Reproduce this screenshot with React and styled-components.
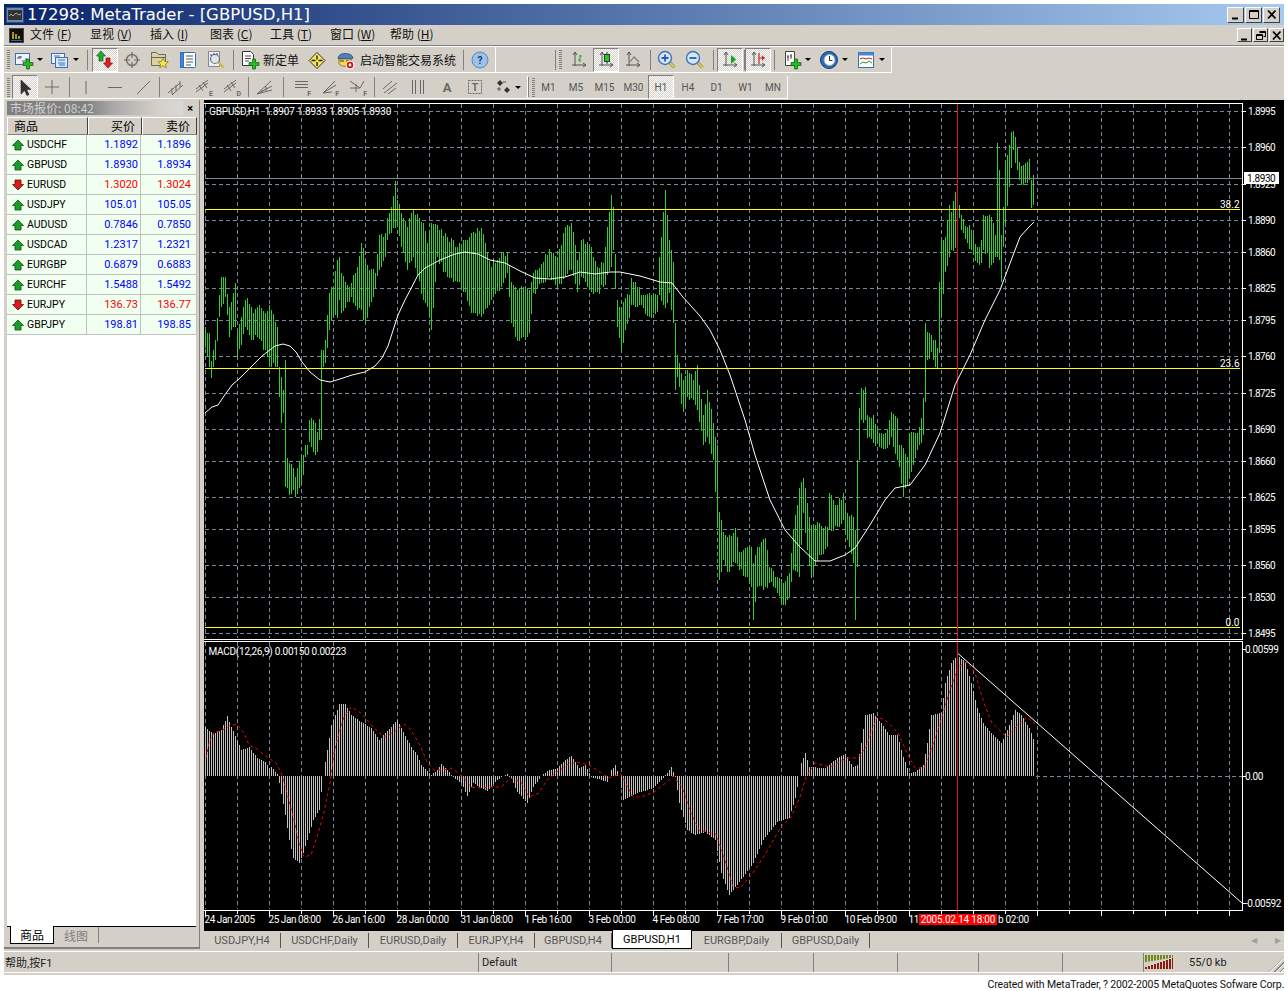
import React from "react";
import styled, { createGlobalStyle } from "styled-components";

const GlobalStyle = createGlobalStyle`
  html, body { margin: 0; padding: 0; background: #fff; }
  body { font-family: Roboto, "Noto Sans CJK SC", sans-serif; font-size: 11px; color: #000; }
  * { box-sizing: border-box; }
`;

/* ---------- chart data, all in page pixels ---------- */

// x, high, low at the turning points of the price bars
const priceKeys = [
  [205,330,380],[206,327,348],[210,333,367],[212,361,378],[215,340,360],[220,295,317],[222,277,307],[226,277,297],
  [230,307,337],[236,283,327],[238,332,357],[245,300,327],[248,298,330],[254,313,340],[258,307,337],[265,313,350],
  [270,305,365],[278,327,367],[279,367,397],[281,377,423],[284,390,413],[285,360,487],[287,458,488],[289,463,495],
  [293,468,490],[296,477,497],[300,462,488],[303,455,475],[305,445,457],[308,445,455],[310,420,442],[312,418,447],
  [316,423,455],[318,432,452],[320,419,440],[321,350,440],[324,350,367],[325,340,363],[327,315,348],[330,293,330],
  [333,288,317],[337,260,318],[339,257,300],[342,273,313],[345,282,308],[350,287,302],[352,283,297],[358,267,310],
  [361,243,310],[365,260,323],[370,270,307],[376,273,288],[380,235,270],[386,233,257],[387,218,240],[392,207,233],
  [395,181,228],[397,200,227],[401,213,247],[407,227,270],[414,210,257],[424,223,300],[428,243,307],[432,223,330],
  [437,225,257],[447,237,277],[457,247,282],[465,240,292],[471,233,313],[481,228,317],[491,267,300],[501,252,287],
  [507,253,273],[511,282,323],[516,287,337],[526,288,340],[529,290,333],[534,273,293],[544,262,283],[549,249,277],
  [557,257,287],[566,227,277],[571,223,270],[577,260,292],[582,240,277],[591,247,292],[597,267,292],[604,263,287],
  [611,195,267],[614,207,250],[617,300,327],[622,308,352],[625,298,330],[630,295,318],[632,278,305],[637,287,307],
  [643,295,308],[650,293,317],[657,295,312],[660,257,295],[666,190,308],[670,240,293],[673,262,323],[676,323,390],
  [678,355,377],[683,380,412],[688,370,397],[693,380,400],[698,365,410],[703,415,445],[708,390,437],[713,423,460],
  [717,445,527],[719,512,580],[723,532,560],[727,537,572],[735,528,563],[740,552,570],[747,547,577],[752,547,587],
  [754,563,620],[758,547,587],[765,538,587],[770,567,583],[777,577,593],[783,583,605],[790,573,597],[793,530,570],
  [800,488,577],[803,478,513],[807,503,550],[812,525,578],[820,523,555],[827,527,547],[830,493,530],[837,505,527],
  [843,493,520],[847,513,540],[853,517,563],[855,530,620],[858,460,567],[859,408,460],[862,388,420],[865,387,420],
  [868,415,438],[873,415,443],[880,433,447],[887,430,448],[892,412,437],[897,418,460],[899,445,467],[903,448,497],
  [907,457,485],[909,433,477],[917,447,460],[918,433,450],[922,418,443],[924,398,435],[925,323,402],[927,332,360],
  [932,335,352],[935,340,367],[937,348,368],[939,282,353],[942,240,317],[946,237,272],[950,205,257],[952,212,250],
  [955,192,248],[959,205,218],[962,215,230],[967,227,243],[972,230,250],[977,247,263],[982,240,263],[983,215,250],
  [987,216,253],[989,215,268],[993,223,263],[995,235,257],[997,143,257],[999,170,260],[1001,235,282],[1004,207,247],
  [1006,162,223],[1009,145,187],[1012,132,168],[1013,131,150],[1016,137,163],[1017,147,170],[1020,162,180],
  [1023,165,185],[1027,162,183],[1029,159,180],[1031,180,208],[1033,175,205],
];

const maLine = [
  [205,413],[212,407],[218,405],[224,396],[232,385],[240,378],[250,368],[262,356],[275,346],[283,344],[290,346],[296,352],
  [302,362],[310,372],[320,380],[330,382],[340,379],[352,375],[365,372],[375,366],[382,358],[388,346],[398,315],[405,300],
  [418,275],[425,268],[440,260],[455,254],[465,252],[478,254],[490,260],[505,263],[520,271],[535,278],[550,279],[565,277],
  [580,272],[595,274],[610,272],[620,272],[640,276],[660,282],[672,283],[682,296],[700,316],[710,330],[720,350],[730,375],
  [745,420],[755,455],[770,500],[785,530],[800,547],[815,561],[830,561],[845,555],[855,548],[870,525],[885,500],[895,488],
  [910,485],[925,465],[940,433],[955,385],[970,355],[985,320],[1000,290],[1012,258],[1020,237],[1028,228],[1034,222],
];

const macdKeys = [
  [205,40],[206,49],[214,42],[221,40],[222,46],[227,60],[232,49],[237,36],[242,26],[249,29],[257,18],[266,14],[269,8],[272,9],[277,2],
  [280,-7],[286,-39],[289,-64],[294,-82],[299,-87],[304,-77],[309,-57],[314,-44],[319,-34],[322,-16],[323,0],[325,14],[328,26],[332,51],
  [336,61],[339,72],[346,72],[351,61],[361,54],[371,48],[379,36],[386,43],[397,56],[404,44],[411,29],[417,21],[422,11],[426,7],[431,1],
  [437,6],[442,12],[449,4],[454,-1],[461,-7],[467,-20],[474,-7],[481,-12],[487,-15],[496,-6],[501,-1],[507,2],[512,-3],[517,-16],[527,-27],
  [534,-11],[541,0],[547,5],[557,8],[566,16],[571,20],[579,8],[586,11],[592,-1],[601,-4],[607,-6],[611,6],[616,11],[619,0],[624,-24],
  [637,-17],[654,-12],[663,-2],[671,9],[676,-1],[680,-27],[688,-54],[695,-59],[706,-56],[716,-64],[721,-97],[730,-119],[740,-106],[753,-87],
  [763,-64],[778,-46],[789,-42],[795,-22],[799,0],[802,13],[806,23],[810,9],[825,8],[838,18],[845,22],[853,9],[858,11],[862,33],[866,61],
  [873,63],[881,53],[890,41],[898,41],[903,19],[909,3],[915,4],[924,11],[927,33],[932,61],[941,63],[946,93],[952,113],[958,121],[965,114],
  [971,93],[977,68],[984,53],[992,43],[1001,33],[1007,46],[1016,66],[1022,61],[1029,48],[1035,32],
];

const signalLine = [
  [206,758],[209,743],[214,732],[221,731],[229,726],[237,724],[244,733],[249,745],[257,749],[267,757],[276,763],[281,772],[287,793],
  [294,820],[299,843],[304,857],[311,855],[317,837],[324,812],[330,783],[334,753],[339,733],[344,717],[351,707],[361,713],[374,728],
  [384,737],[394,732],[404,724],[411,730],[421,747],[427,762],[434,770],[444,770],[451,768],[457,772],[464,778],[471,787],[481,788],
  [491,787],[501,787],[511,778],[521,782],[529,797],[539,793],[547,780],[557,772],[567,765],[577,762],[589,765],[597,770],[609,778],
  [621,774],[624,780],[633,797],[641,797],[654,792],[667,782],[673,776],[682,787],[691,813],[699,830],[716,834],[725,860],[733,887],
  [740,888],[753,873],[766,853],[781,827],[791,817],[800,797],[806,777],[815,763],[830,767],[847,758],[858,758],[866,747],[877,717],
  [885,720],[898,733],[907,753],[915,768],[924,768],[932,747],[941,720],[950,690],[958,667],[967,662],[975,673],[984,703],[992,723],
  [1007,737],[1016,727],[1027,717],[1037,726],
];

const barX = Array.from({ length: 415 }, (_, i) => 205.5 + i * 2);
const barIndex = (x) => Math.floor((x - 205) / 2);

function noise(i) {
  const s = Math.sin(i * 12.9898) * 43758.5453;
  return s - Math.floor(s) - 0.5;
}

// spreads the key points onto the 2px bar raster, keeping spikes on their own bar
function interpolate(keys, index) {
  const snapped = keys
    .map(([x, ...v]) => [barIndex(x), ...v])
    .filter((k, i, all) => !all[i + 1] || all[i + 1][0] !== k[0]);
  return barX.map((_, i) => {
    let next = snapped.findIndex((k) => k[0] >= i);
    if (next === -1) next = snapped.length - 1;
    const b = snapped[next];
    const a = snapped[Math.max(0, next - 1)];
    if (b[0] === i || a[0] === b[0]) return b[index];
    return a[index] + ((b[index] - a[index]) * (i - a[0])) / (b[0] - a[0]);
  });
}

const highs = interpolate(priceKeys, 1);
const lows = interpolate(priceKeys, 2);
const macd = interpolate(macdKeys, 1);

const barsPath = barX
  .map((x, i) => {
    const exact = priceKeys.some((k) => barIndex(k[0]) === i);
    const hi = Math.round(highs[i] + (exact ? 0 : noise(i) * 7));
    const lo = Math.round(lows[i] + (exact ? 0 : noise(i + 99) * 7));
    return `M${x} ${hi}V${Math.max(lo, hi + 6)}`;
  })
  .join("");

const macdPath = barX.map((x, i) => `M${x} 776V${Math.round(776 - macd[i])}`).join("");

const toPoints = (list) => list.map(([x, y]) => `${x},${y}`).join(" ");

const gridX = Array.from({ length: 33 }, (_, i) => 205.5 + i * 32);

const priceLevels = [
  ["1.8995",111],["1.8960",147],["1.8925",184],["1.8890",220],["1.8860",252],["1.8825",288],["1.8795",320],["1.8760",356],
  ["1.8725",393],["1.8690",429],["1.8660",461],["1.8625",497],["1.8595",529],["1.8560",565],["1.8530",597],["1.8495",633],
];

const timeLabels = [
  "24 Jan 2005","25 Jan 08:00","26 Jan 16:00","28 Jan 00:00","31 Jan 08:00","1 Feb 16:00","3 Feb 00:00",
  "4 Feb 08:00","7 Feb 17:00","9 Feb 01:00","10 Feb 09:00","11",
];

const fibLevels = [["38.2",209],["23.6",368],["0.0",627]];

/* ---------- page data ---------- */

const menus = [
  ["文件","F"],["显视","V"],["插入","I"],["图表","C"],["工具","T"],["窗口","W"],["帮助","H"],
];

const quotes = [
  ["USDCHF","1.1892","1.1896",true],["GBPUSD","1.8930","1.8934",true],["EURUSD","1.3020","1.3024",false],
  ["USDJPY","105.01","105.05",true],["AUDUSD","0.7846","0.7850",true],["USDCAD","1.2317","1.2321",true],
  ["EURGBP","0.6879","0.6883",true],["EURCHF","1.5488","1.5492",true],["EURJPY","136.73","136.77",false],
  ["GBPJPY","198.81","198.85",true],
];

const chartTabs = [
  ["USDJPY,H4",77],["USDCHF,Daily",88],["EURUSD,Daily",89],["EURJPY,H4",77],["GBPUSD,H4",77],
  ["GBPUSD,H1",80,true],["EURGBP,Daily",90],["GBPUSD,Daily",88],
];

const periods = [["M1",27],["M5",28],["M15",29],["M30",29],["H1",26,true],["H4",28],["D1",29],["W1",29],["MN",26]];

/* ---------- layout ---------- */

const Page = styled.div`
  width: 1288px;
  height: 991px;
  padding: 4px 4px 0;
  overflow: hidden;
`;

const Win = styled.div`
  width: 1280px;
  background: #d4d0c8;
`;

const TitleBar = styled.div`
  height: 21px;
  display: flex;
  align-items: center;
  padding: 0 4px 0 2px;
  background: linear-gradient(90deg, #0a246a, #a6caf0);
  color: #fff;
  font: 16.5px "DejaVu Sans", sans-serif;
`;

const TitleText = styled.span`
  margin-left: 3px;
  flex: 1;
`;

const CaptionBtn = styled.button`
  width: ${(p) => (p.$small ? 15 : 17)}px;
  height: ${(p) => (p.$small ? 14 : 16)}px;
  margin-left: 1px;
  padding: 0;
  border: 1px solid;
  border-color: #fff #404040 #404040 #fff;
  background: #d4d0c8;
  display: flex;
  align-items: center;
  justify-content: center;
`;

const MenuBar = styled.div`
  height: 20px;
  display: flex;
  align-items: center;
  padding-left: 5px;
`;

const MenuItem = styled.span`
  width: 60px;
  margin-top: -3px;
  font: 12px "Noto Sans CJK SC", sans-serif;
  white-space: pre;
  color: #111;
`;

const MenuSpacer = styled.div`
  flex: 1;
`;

const MenuLogo = styled.div`
  width: 21px;
  display: flex;
`;

const Rule = styled.div`
  height: 2px;
  border-top: 1px solid #808080;
  border-bottom: 1px solid #fff;
`;

const ToolRow = styled.div`
  height: ${(p) => p.$h}px;
  padding-top: ${(p) => p.$top || 0}px;
  display: flex;
`;

const Band = styled.div`
  display: flex;
  align-items: center;
  width: ${(p) => p.$w}px;
  border-bottom: 1px solid #fff;
  border-right: ${(p) => (p.$open ? 0 : "1px solid #fff")};
`;

const Grip = styled.div`
  width: 3px;
  height: 19px;
  flex: none;
  margin: 0 ${(p) => p.$after}px 0 3px;
  background: repeating-linear-gradient(180deg, #808080 0 1px, #d4d0c8 1px 2px);
`;

const ToolBtn = styled.div`
  width: ${(p) => p.$w || 28}px;
  height: ${(p) => (p.$tall ? 24 : 22)}px;
  flex: none;
  display: flex;
  align-items: center;
  justify-content: ${(p) => (p.$left ? "flex-start" : "center")};
  padding-left: ${(p) => p.$left || 0}px;
  gap: ${(p) => p.$gap || 0}px;
  font: 12px "Noto Sans CJK SC", sans-serif;
  color: #111;
  ${(p) =>
    p.$pressed &&
    `
    background: repeating-conic-gradient(#fff 0 25%, #d4d0c8 0 50%) 0 0 / 2px 2px;
    border: 1px solid;
    border-color: #808080 #fff #fff #808080;
  `}
`;

const PeriodBtn = styled(ToolBtn)`
  font: 10px Roboto, sans-serif;
  color: #555;
`;

const Sep = styled.div`
  width: ${(p) => p.$w || 6}px;
  height: 20px;
  flex: none;
  display: flex;
  justify-content: center;
  &::before {
    content: "";
    width: 1px;
    background: #808080;
  }
`;

const Drop = styled.i`
  width: 0;
  height: 0;
  flex: none;
  border: 3px solid transparent;
  border-top: 3px solid #000;
  border-bottom: 0;
`;

const Body = styled.div`
  display: flex;
  margin-top: 1px;
  height: 850px;
`;

const LeftPanel = styled.div`
  width: 196px;
  height: 849px;
  flex: none;
  padding: 1px 3px 0;
  display: flex;
  flex-direction: column;
  border-bottom: 2px solid #808080;
  border-right: 1px solid #808080;
`;

const PanelHead = styled.div`
  height: 14px;
  flex: none;
  display: flex;
  align-items: center;
  justify-content: space-between;
`;

const PanelTitle = styled.div`
  width: 176px;
  height: 14px;
  padding-left: 3px;
  font: 12px/14px "Noto Sans CJK SC", sans-serif;
  color: #d0d0d0;
  background: linear-gradient(90deg, #808080 45%, #a8a8a8 60%, #d4d0c8 85%, #d8d8d8);
`;

const CloseMark = styled.span`
  font: bold 11px Roboto, sans-serif;
  margin-right: 3px;
`;

const QuoteList = styled.div`
  flex: 1;
  margin-top: 2px;
  background: #fff;
`;

const QuoteHead = styled.div`
  display: grid;
  grid-template-columns: 81px 54px 55px;
  height: 18px;
`;

const HeadCell = styled.div`
  padding: 0 ${(p) => (p.$right ? 6 : 0)}px 0 ${(p) => (p.$right ? 0 : 6)}px;
  text-align: ${(p) => (p.$right ? "right" : "left")};
  font: 12px/16px "Noto Sans CJK SC", sans-serif;
  background: #d4d0c8;
  border: 1px solid;
  border-color: #fff #404040 #808080 #fff;
`;

const QuoteRow = styled.div`
  display: grid;
  grid-template-columns: 80px 54px 56px;
  height: 20px;
  background: #f0fff0;
  border-bottom: 1px solid #c0c0c0;
`;

const SymbolCell = styled.div`
  display: flex;
  align-items: center;
  gap: 3px;
  padding-left: 5px;
  font: 10.5px Roboto, sans-serif;
  color: #000;
  border-right: 1px solid #c0c0c0;
`;

const PriceCell = styled.div`
  padding-right: ${(p) => p.$pad}px;
  text-align: right;
  font: 11px/19px Roboto, sans-serif;
  color: ${(p) => (p.$up ? "#0000ff" : "#ff0000")};
  border-right: 1px solid #c0c0c0;
`;

const PanelTabs = styled.div`
  height: 21px;
  flex: none;
  display: flex;
  align-items: flex-start;
  padding-left: 3px;
  border-top: 1px solid #000;
  font: 12px "Noto Sans CJK SC", sans-serif;
`;

const PanelTab = styled.div`
  height: ${(p) => (p.$active ? 18 : 16)}px;
  margin-top: ${(p) => (p.$active ? -1 : 0)}px;
  width: ${(p) => p.$w}px;
  text-align: center;
  line-height: 17px;
  color: ${(p) => (p.$active ? "#000" : "#808080")};
  background: ${(p) => (p.$active ? "#fff" : "transparent")};
  border: ${(p) => (p.$active ? "1px solid #000" : 0)};
  border-top: 0;
  border-right: ${(p) => (p.$active ? "1px solid #000" : "1px solid #808080")};
`;

const ChartColumn = styled.div`
  flex: 1;
  margin-left: 4px;
  min-width: 0;
  display: flex;
  flex-direction: column;
`;

const ChartSvg = styled.svg`
  display: block;
  width: 1080px;
  height: 830px;
  background: #000;
  flex: none;
`;

const ChartText = styled.text`
  font: 10px Roboto, sans-serif;
  white-space: pre;
  fill: ${(p) => p.$fill || "#fff"};
  letter-spacing: ${(p) => p.$track || 0}px;
`;

const TabStrip = styled.div`
  height: 20px;
  display: flex;
  font: 11px/19px Roboto, sans-serif;
  border-top: 1px solid #000;
`;

const ChartTab = styled.div`
  width: ${(p) => p.$w}px;
  height: ${(p) => (p.$active ? 19 : 15)}px;
  margin-top: ${(p) => (p.$active ? -1 : 2)}px;
  line-height: ${(p) => (p.$active ? 19 : 15)}px;
  text-align: center;
  color: ${(p) => (p.$active ? "#000" : "#555")};
  background: ${(p) => (p.$active ? "#fff" : "transparent")};
  border-right: ${(p) => (p.$active ? "1px solid #000" : "1px solid #555")};
  border-bottom: ${(p) => (p.$active ? "1px solid #000" : 0)};
  border-left: ${(p) => (p.$active ? "1px solid #000" : 0)};
`;

const TabArrows = styled.div`
  margin-left: auto;
  width: 36px;
  display: flex;
  justify-content: space-between;
  align-items: center;
  padding: 0 3px;
  color: #a0a0a0;
  font-size: 8px;
`;

const StatusBar = styled.div`
  height: 21px;
  margin-top: 1px;
  display: flex;
  align-items: center;
  border-top: 1px solid #fff;
  position: relative;
`;

const StatusCell = styled.div`
  width: ${(p) => p.$w}px;
  height: 19px;
  flex: none;
  padding-left: ${(p) => p.$pad || 0}px;
  display: flex;
  align-items: center;
  gap: ${(p) => p.$gap || 0}px;
  font: 11px Roboto, "Noto Sans CJK SC", sans-serif;
  color: #222;
  border-right: ${(p) => (p.$last ? 0 : "1px solid #808080")};
`;

const Resize = styled.div`
  position: absolute;
  right: 0;
  bottom: 0;
  width: 15px;
  height: 15px;
  background: repeating-linear-gradient(135deg, transparent 0 2px, #808080 2px 3px, #fff 3px 4px);
  clip-path: polygon(100% 0, 100% 100%, 0 100%);
`;

const WinFoot = styled.div`
  height: 3px;
  border-top: 1px solid #fff;
  background: #d4d0c8;
`;

const Credit = styled.div`
  text-align: right;
  padding-top: 3px;
  font: 10.5px Roboto, sans-serif;
  letter-spacing: -0.15px;
  color: #111;
`;

/* ---------- icons ---------- */

const Ico = styled.svg`
  display: block;
  flex: none;
`;

const Icon = ({ w = 20, h = 20, children }) => (
  <Ico width={w} height={h} viewBox={`0 0 ${w} ${h}`}>
    {children}
  </Ico>
);

const GreenPlus = ({ x = 10, y = 10 }) => (
  <path
    transform={`translate(${x} ${y})`}
    d="M3.500 0h3v3.500H10v3H6.500V10h-3V6.500H0v-3h3.500z"
    fill="#22c01e"
    stroke="#0c5a10"
    strokeWidth=".7"
  />
);

const NewChartIcon = () => (
  <Icon>
    <rect x="1.500" y="3.500" width="14" height="11" fill="#eef4ff" stroke="#3a6fb0" />
    <path d="M4 7h4M4 7v2M12 8v3M8 11h5M6 6v3" stroke="#555" fill="none" />
    <GreenPlus x={9} y={9} />
  </Icon>
);

const ProfileIcon = () => (
  <Icon>
    <rect x="1.500" y="3.500" width="13" height="10" fill="#eef4ff" stroke="#3a6fb0" />
    <rect x="5.500" y="7.500" width="12" height="10" fill="#dbe8fa" stroke="#3a6fb0" />
    <path d="M4 6h6M8 10h7M8 13h7M9 15h6" stroke="#3a6fb0" />
  </Icon>
);

const WatchIcon = () => (
  <Icon>
    <path d="M6 1l4.500 5H8v5H4V6H1.500z" fill="#1fae2a" stroke="#0c5a10" strokeWidth=".7" />
    <path d="M11 8h4v5h2.500L13 18l-4.500-5H11z" fill="#e02020" stroke="#7a0808" strokeWidth=".7" />
  </Icon>
);

const CrossIcon = () => (
  <Icon>
    <circle cx="10" cy="10" r="5.500" fill="none" stroke="#7a7a72" strokeWidth="1.600" />
    <path d="M10 2v6M10 12v6M2 10h6M12 10h6" stroke="#6a6a62" strokeWidth="1.200" />
  </Icon>
);

const FolderIcon = () => (
  <Icon>
    <path d="M1.500 5.500V2.500h5l2 2h7v11h-14z" fill="#d9d1a8" stroke="#6d6a50" />
    <path d="M1.500 7.500h14" stroke="#6d6a50" />
    <path d="M13 8l1.600 3.400 3.700.4-2.800 2.400.9 3.600-3.400-2-3.300 2 .9-3.600-2.800-2.400 3.700-.4z" fill="#f4e84a" stroke="#7c7420" strokeWidth=".7" />
  </Icon>
);

const BookIcon = () => (
  <Icon>
    <rect x="2.500" y="2.500" width="15" height="15" rx="1" fill="#fff" stroke="#2f6fc0" />
    <rect x="2.500" y="2.500" width="3" height="15" fill="#3f86de" stroke="#2f6fc0" />
    <path d="M8 6h7M8 9h7M8 12h7M8 15h5" stroke="#555" />
  </Icon>
);

const LensDocIcon = () => (
  <Icon>
    <path d="M2.500 1.500h11v15h-11z" fill="#eef" stroke="#888" />
    <circle cx="9" cy="9" r="4.500" fill="#d9e8f5" stroke="#707070" strokeWidth="1.200" />
    <path d="M5 4v2M8 3v2M11 3v2" stroke="#444" />
    <path d="M12.500 12.500l5 5" stroke="#c9b92c" strokeWidth="2" />
  </Icon>
);

const OrderIcon = () => (
  <Icon>
    <path d="M2.500 1.500h8l3 3v11h-11z" fill="#fff" stroke="#333" />
    <path d="M5 6h6M5 8.500h6M5 11h4" stroke="#444" />
    <GreenPlus x={9} y={9} />
  </Icon>
);

const DiamondIcon = () => (
  <Icon>
    <path d="M10 2.500L18 10.500l-8 8-8-8z" fill="#f5e55c" stroke="#333" />
    <path d="M4.500 10.500h4M15.500 10.500h-4M10 5.500v4M10 12v4" stroke="#222" strokeWidth="1.400" />
  </Icon>
);

const ExpertIcon = () => (
  <Icon>
    <path d="M3 8.500c0-3 3-5 7-5s7 1 8 4.500l-1.500 1z" fill="#4c80c4" stroke="#1e3f70" strokeWidth=".7" />
    <path d="M4 9h12v5c-3 3-9 3-12 0z" fill="#f2dc4e" stroke="#5b5318" strokeWidth=".7" />
    <path d="M5 11h4M11 11h3" stroke="#333" />
    <circle cx="15" cy="15" r="4" fill="#d81818" stroke="#fff" />
    <circle cx="15" cy="15" r="1.400" fill="#fff" />
  </Icon>
);

const HelpIcon = () => (
  <Icon>
    <circle cx="10" cy="10" r="8" fill="#9cc0ea" stroke="#5d86bd" />
    <text x="10" y="14" textAnchor="middle" fontFamily="Roboto" fontWeight="700" fontSize="10" fill="#123a7a">?</text>
  </Icon>
);

const Axes = () => <path d="M6 2v14M3 15h14M14 13l3 2-3 2M4 5l2-3 2 3" fill="none" stroke="#555" />;

const BarsIcon = () => (
  <Icon>
    <Axes />
    <path d="M11 5v7M9 10h2M11 6h2" stroke="#1d9f22" />
  </Icon>
);

const CandleIcon = () => (
  <Icon>
    <Axes />
    <path d="M11 2v12" stroke="#333" />
    <rect x="8.500" y="4.500" width="5" height="7" fill="#20d020" stroke="#333" />
  </Icon>
);

const LineIcon = () => (
  <Icon>
    <Axes />
    <path d="M7 12l4-5 5 5" fill="none" stroke="#7a7a72" strokeWidth="1.200" />
  </Icon>
);

const ZoomIcon = ({ plus }) => (
  <Icon>
    <path d="M11.500 11.500l6 6" stroke="#8d8a2a" strokeWidth="3" />
    <path d="M11.500 11.500l6 6" stroke="#ecdf55" strokeWidth="1.400" />
    <circle cx="8" cy="8" r="6.500" fill="#d6e6fa" stroke="#3d72bd" strokeWidth="1.400" />
    <path d={plus ? "M4.500 8h7M8 4.500v7" : "M4.500 8h7"} stroke="#2a5ca8" strokeWidth="1.800" />
  </Icon>
);

const ShiftIcon = () => (
  <Icon>
    <Axes />
    <path d="M11 5l5 4.500-5 4.500z" fill="#17a31f" />
  </Icon>
);

const AutoIcon = () => (
  <Icon>
    <Axes />
    <path d="M11 3v11M11 8h6" stroke="#c22" strokeWidth="1.200" />
    <path d="M14 5l2.500 3-2.500 3z" fill="#c22" />
  </Icon>
);

const IndicatorIcon = () => (
  <Icon>
    <path d="M3.500 1.500h9v14h-9z" fill="#fff" stroke="#444" />
    <path d="M6 5v6M9 4v5M5 7h2M8 6h2" stroke="#444" />
    <GreenPlus x={9} y={9} />
  </Icon>
);

const ClockIcon = () => (
  <Icon>
    <circle cx="10" cy="10" r="8.500" fill="#2c68b8" stroke="#123e82" />
    <circle cx="10.500" cy="10" r="5.500" fill="#fff" stroke="#9ab" />
    <path d="M10.500 6v4.500h3" stroke="#333" fill="none" />
  </Icon>
);

const TemplateIcon = () => (
  <Icon>
    <rect x="2.500" y="2.500" width="15" height="15" fill="#fff" stroke="#3a6fb0" />
    <rect x="2.500" y="2.500" width="15" height="3" fill="#4a86d4" />
    <path d="M4 9l3-1 3 1 3-1 3 1" fill="none" stroke="#d02020" />
    <path d="M4 14l3-2 3 1 3-2 3 2" fill="none" stroke="#20a020" />
  </Icon>
);

const stroke = "#6a6a64";

const DrawIcon = ({ d, tag }) => (
  <Icon>
    <path d={d} fill="none" stroke={stroke} />
    {tag && (
      <text x="19" y="19" textAnchor="end" fontFamily="Roboto" fontWeight="700" fontSize="7" fill={stroke}>
        {tag}
      </text>
    )}
  </Icon>
);

const CursorIcon = () => (
  <Icon>
    <path d="M6 3v14l3.500-3.500 2.500 5 2-1-2.500-5H16z" fill="#333" stroke="#222" strokeWidth=".6" />
  </Icon>
);

const ObjectsIcon = () => (
  <Icon>
    <path d="M7 3l3 3-3 3-3-3zM14 10l3 3-3 3-3-3z" fill="#333" />
    <path d="M4 12h4M6 10v4M10 5h3" stroke="#555" />
  </Icon>
);

const LabelBoxIcon = () => (
  <Icon>
    <rect x="3.500" y="3.500" width="13" height="13" fill="none" stroke={stroke} strokeDasharray="2 1" />
    <text x="10" y="14" textAnchor="middle" fontFamily="Roboto" fontWeight="700" fontSize="10.500" fill={stroke}>T</text>
  </Icon>
);

const TextIcon = () => (
  <Icon>
    <text x="10" y="15" textAnchor="middle" fontFamily="Roboto" fontWeight="700" fontSize="13" fill={stroke}>A</text>
  </Icon>
);

const TrendArrow = ({ up }) => (
  <Icon w={12} h={12}>
    <path
      d={up ? "M6 1l5.500 5.500H9V11H3V6.500H.5z" : "M3 1h6v4.500h2.500L6 11 .5 5.500H3z"}
      fill={up ? "#1d9c2a" : "#d81c1c"}
      stroke={up ? "#0d4f16" : "#6d0a0a"}
      strokeWidth=".8"
    />
  </Icon>
);

const AppMark = () => (
  <Icon w={15} h={15}>
    <rect x=".5" y=".5" width="14" height="14" fill="#101010" stroke="#444" />
    <path d="M4 4v7M7 6v5M10 8v3" stroke="#f0d020" strokeWidth="1.400" />
    <path d="M2 12.500h11" stroke="#2060d0" />
  </Icon>
);

const TitleIcon = () => (
  <Icon w={18} h={16}>
    <rect x=".5" y=".5" width="17" height="15" fill="#6d88b5" stroke="#2c4a80" />
    <rect x="2" y="3" width="14" height="10" fill="#333" />
    <path d="M3 9l2-2 2 2 3-3 3 2 2-1" fill="none" stroke="#aaa" />
  </Icon>
);

const Traffic = () => (
  <Icon w={28} h={14}>
    {Array.from({ length: 10 }, (_, i) => (
      <g key={i}>
        <rect x={i * 3} y="0" width="2" height={7 - i * 0.5} fill="#6f8a12" />
        <rect x={i * 3} y={12 - i} width="2" height={2 + i} fill="#8c1c10" />
      </g>
    ))}
  </Icon>
);

const CaptionGlyph = ({ kind }) => (
  <Icon w={12} h={11}>
    {kind === "min" && <path d="M2 9.500h6" stroke="#000" strokeWidth="2" />}
    {kind === "max" && <path d="M1.500 1.500h9v8h-9zM1.500 2.500h9" fill="none" stroke="#000" />}
    {kind === "restore" && <path d="M4.500 1.500h6v5h-2M4.500 2.500h6M1.500 4.500h6v5h-6zM1.500 5.500h6" fill="none" stroke="#000" />}
    {kind === "close" && <path d="M2 1.500l7.500 8M9.500 1.500l-7.500 8" stroke="#000" strokeWidth="1.800" />}
  </Icon>
);

/* ---------- chart ---------- */

const Chart = () => (
  <ChartSvg viewBox="204 100 1080 830">
    <g shapeRendering="crispEdges">
      {/* grid */}
      {priceLevels.map(([, y]) => (
        <path key={y} d={`M205 ${y + 0.5}H1242`} stroke="#77889a" strokeDasharray="4 3" />
      ))}
      {gridX.map((x) => (
        <React.Fragment key={x}>
          <path d={`M${x} 104V638`} stroke="#77889a" strokeDasharray="4 3" />
          <path d={`M${x} 642V909`} stroke="#77889a" strokeDasharray="4 3" />
        </React.Fragment>
      ))}
      <path d="M1036 776.500H1242" stroke="#77889a" strokeDasharray="4 3" />

      {/* price pane */}
      <path d={barsPath} stroke="#32cd32" />
      <path d="M205 178.500H1242" stroke="#778899" />
      {fibLevels.map(([, y]) => (
        <path key={y} d={`M205 ${y + 0.5}H1240`} stroke="#ffff00" />
      ))}

      {/* macd pane */}
      <path d={macdPath} stroke="#c0c0c0" />

      {/* crosshair */}
      <path d="M957.500 104V914" stroke="#e01010" />

      {/* frames */}
      <path d="M204 103.500H1242.500V639.500H204M204 641.500H1242.500V910.500H204" fill="none" stroke="#fff" />

      {priceLevels.map(([, y]) => (
        <path key={y} d={`M1243 ${y + 0.5}H1246`} stroke="#fff" />
      ))}
      {[649, 776, 903].map((y) => (
        <path key={y} d={`M1243 ${y + 0.5}H1246`} stroke="#fff" />
      ))}
      {gridX.map((x, i) => (
        <path key={x} d={`M${x} 911V${i % 2 ? 914 : 916}`} stroke="#fff" />
      ))}
      <rect x="919" y="914" width="78" height="11" fill="#ff0000" />
    </g>

    <polyline points={toPoints(maLine)} fill="none" stroke="#fff" />
    <polyline points={toPoints(signalLine)} fill="none" stroke="#ff0000" strokeDasharray="3 3" />
    <path d="M958 653.500L1242 903" stroke="#fff" />

    <ChartText x="209" y="115" $track={-0.15}>GBPUSD,H1  1.8907 1.8933 1.8905 1.8930</ChartText>
    <ChartText x="208.500" y="655" $track={-0.25}>MACD(12,26,9) 0.00150 0.00223</ChartText>

    {priceLevels.map(([label, y]) => (
      <ChartText key={label} x="1248" y={y + 3.500} $track={-0.6}>{label}</ChartText>
    ))}
    <rect x="1244" y="172" width="35" height="12" fill="#fff" />
    <ChartText x="1247" y="181.500" $fill="#000" $track={-0.4}>1.8930</ChartText>
    {fibLevels.map(([label, y]) => (
      <ChartText key={label} x="1239.500" y={y - 1.500} textAnchor="end">{label}</ChartText>
    ))}

    <ChartText x="1245" y="652.500" $track={-0.4}>0.00599</ChartText>
    <ChartText x="1245" y="779.500" $track={-0.4}>0.00</ChartText>
    <ChartText x="1245" y="906.500" $track={-0.4}>-0.00592</ChartText>

    {timeLabels.map((label, i) => (
      <ChartText key={label} x={204.500 + i * 64} y="923" $track={-0.45}>{label}</ChartText>
    ))}
    <ChartText x="958" y="923" textAnchor="middle" $track={-0.2}>2005.02.14 18:00</ChartText>
    <ChartText x="998" y="923" $track={-0.3}>b 02:00</ChartText>
  </ChartSvg>
);

/* ---------- page ---------- */

const App = () => (
  <Page>
    <GlobalStyle />
    <Win>
      <TitleBar>
        <TitleIcon />
        <TitleText>17298: MetaTrader - [GBPUSD,H1]</TitleText>
        <CaptionBtn><CaptionGlyph kind="min" /></CaptionBtn>
        <CaptionBtn><CaptionGlyph kind="max" /></CaptionBtn>
        <CaptionBtn><CaptionGlyph kind="close" /></CaptionBtn>
      </TitleBar>

      <MenuBar>
        <MenuLogo><AppMark /></MenuLogo>
        {menus.map(([label, key]) => (
          <MenuItem key={key}>
            {label} (<u>{key}</u>)
          </MenuItem>
        ))}
        <MenuSpacer />
        <CaptionBtn $small><CaptionGlyph kind="min" /></CaptionBtn>
        <CaptionBtn $small><CaptionGlyph kind="restore" /></CaptionBtn>
        <CaptionBtn $small><CaptionGlyph kind="close" /></CaptionBtn>
      </MenuBar>
      <Rule />

      <ToolRow $h={26}>
        <Band $w={492}>
          <Grip $after={1} />
          <ToolBtn $w={35} $gap={3}><NewChartIcon /><Drop /></ToolBtn>
          <ToolBtn $w={36} $gap={3}><ProfileIcon /><Drop /></ToolBtn>
          <Sep $w={10} />
          <ToolBtn $w={26} $tall $pressed><WatchIcon /></ToolBtn>
          <ToolBtn><CrossIcon /></ToolBtn>
          <ToolBtn><FolderIcon /></ToolBtn>
          <ToolBtn><BookIcon /></ToolBtn>
          <ToolBtn><LensDocIcon /></ToolBtn>
          <Sep />
          <ToolBtn $w={67} $left={4} $gap={3}><OrderIcon />新定单</ToolBtn>
          <ToolBtn><DiamondIcon /></ToolBtn>
          <ToolBtn $w={129} $left={4} $gap={5}><ExpertIcon />启动智能交易系统</ToolBtn>
          <Sep />
          <ToolBtn><HelpIcon /></ToolBtn>
        </Band>
        <Band $w={59} $open />
        <Band $w={337}>
          <Sep $w={1} />
          <Grip $after={3} />
          <ToolBtn><BarsIcon /></ToolBtn>
          <ToolBtn $w={26} $tall $pressed><CandleIcon /></ToolBtn>
          <ToolBtn><LineIcon /></ToolBtn>
          <Sep />
          <ToolBtn><ZoomIcon plus /></ToolBtn>
          <ToolBtn><ZoomIcon /></ToolBtn>
          <Sep $w={8} />
          <ToolBtn $w={26} $tall $pressed><ShiftIcon /></ToolBtn>
          <Sep $w={2} />
          <ToolBtn $w={26} $tall $pressed><AutoIcon /></ToolBtn>
          <Sep $w={7} />
          <ToolBtn $w={37} $gap={3}><IndicatorIcon /><Drop /></ToolBtn>
          <ToolBtn $w={37} $gap={3}><ClockIcon /><Drop /></ToolBtn>
          <ToolBtn $w={37} $gap={3}><TemplateIcon /><Drop /></ToolBtn>
        </Band>
      </ToolRow>

      <ToolRow $h={26} $top={3}>
        <Band $w={524}>
          <Grip $after={2} />
          <ToolBtn $w={26} $tall $pressed><CursorIcon /></ToolBtn>
          <ToolBtn><DrawIcon d="M10 3v14M3 10h14" /></ToolBtn>
          <Sep />
          <ToolBtn><DrawIcon d="M10 4v13" /></ToolBtn>
          <ToolBtn $w={29}><DrawIcon d="M3 10.500h14" /></ToolBtn>
          <ToolBtn><DrawIcon d="M4 17L17 4" /></ToolBtn>
          <Sep $w={4} />
          <ToolBtn><DrawIcon d="M3 16L15 6M7 18L18 8M7 11v6M11 8v6M15 4v6" /></ToolBtn>
          <ToolBtn $w={29}><DrawIcon d="M2 12L14 3M2 15L14 6M5 8l4 6M9 5l4 6" tag="E" /></ToolBtn>
          <ToolBtn><DrawIcon d="M2 12L14 3M2 15L14 6M5 8l4 6M9 5l4 6" tag="D" /></ToolBtn>
          <Sep $w={4} />
          <ToolBtn><DrawIcon d="M3 17L17 4M3 17L18 9M3 17L18 13M8 13v3M12 9v5" /></ToolBtn>
          <Sep $w={10} />
          <ToolBtn><DrawIcon d="M3 4.500h13M3 7.500h13M3 10.500h13" tag="F" /></ToolBtn>
          <ToolBtn><DrawIcon d="M3 16L15 4M3 16L16 8M3 16L12 15" tag="F" /></ToolBtn>
          <ToolBtn><DrawIcon d="M2 4l10 7 4-7M2 11l10 0M8 7v8" tag="F" /></ToolBtn>
          <Sep $w={4} />
          <ToolBtn><DrawIcon d="M3 12L12 4M4 16L17 6M8 17L16 11" /></ToolBtn>
          <ToolBtn><DrawIcon d="M4.500 3v14M7.500 3v14M12.500 3v14M15.500 3v14" /></ToolBtn>
          <ToolBtn $w={29}><TextIcon /></ToolBtn>
          <ToolBtn><LabelBoxIcon /></ToolBtn>
          <ToolBtn $w={36} $gap={2}><ObjectsIcon /><Drop /></ToolBtn>
        </Band>
        <Band $w={260}>
          <Sep $w={1} />
          <Grip $after={0} />
          {periods.map(([label, w, on]) => (
            <PeriodBtn key={label} $w={w} $tall={on} $pressed={on}>{label}</PeriodBtn>
          ))}
        </Band>
      </ToolRow>

      <Body>
        <LeftPanel>
          <PanelHead>
            <PanelTitle>市场报价: 08:42</PanelTitle>
            <CloseMark>×</CloseMark>
          </PanelHead>
          <QuoteList>
            <QuoteHead>
              <HeadCell>商品</HeadCell>
              <HeadCell $right>买价</HeadCell>
              <HeadCell $right>卖价</HeadCell>
            </QuoteHead>
            {quotes.map(([symbol, bid, ask, up]) => (
              <QuoteRow key={symbol}>
                <SymbolCell><TrendArrow up={up} />{symbol}</SymbolCell>
                <PriceCell $up={up} $pad={2}>{bid}</PriceCell>
                <PriceCell $up={up} $pad={5}>{ask}</PriceCell>
              </QuoteRow>
            ))}
          </QuoteList>
          <PanelTabs>
            <PanelTab $active $w={44}>商品</PanelTab>
            <PanelTab $w={45}>线图</PanelTab>
          </PanelTabs>
        </LeftPanel>

        <ChartColumn>
          <Chart />
          <TabStrip>
            {chartTabs.map(([label, w, on]) => (
              <ChartTab key={label} $w={w} $active={on}>{label}</ChartTab>
            ))}
            <TabArrows><span>◀</span><span>▶</span></TabArrows>
          </TabStrip>
        </ChartColumn>
      </Body>

      <StatusBar>
        <StatusCell $w={475} $pad={1}>帮助,按F1</StatusCell>
        <StatusCell $w={133} $pad={3}>Default</StatusCell>
        <StatusCell $w={117} />
        <StatusCell $w={85} />
        <StatusCell $w={84} />
        <StatusCell $w={81} />
        <StatusCell $w={84} />
        <StatusCell $w={81} />
        <StatusCell $w={140} $pad={1} $gap={16} $last><Traffic />55/0 kb</StatusCell>
        <Resize />
      </StatusBar>
      <WinFoot />
    </Win>
    <Credit>Created with MetaTrader, ? 2002-2005 MetaQuotes Sofware Corp.</Credit>
  </Page>
);

export default App;
